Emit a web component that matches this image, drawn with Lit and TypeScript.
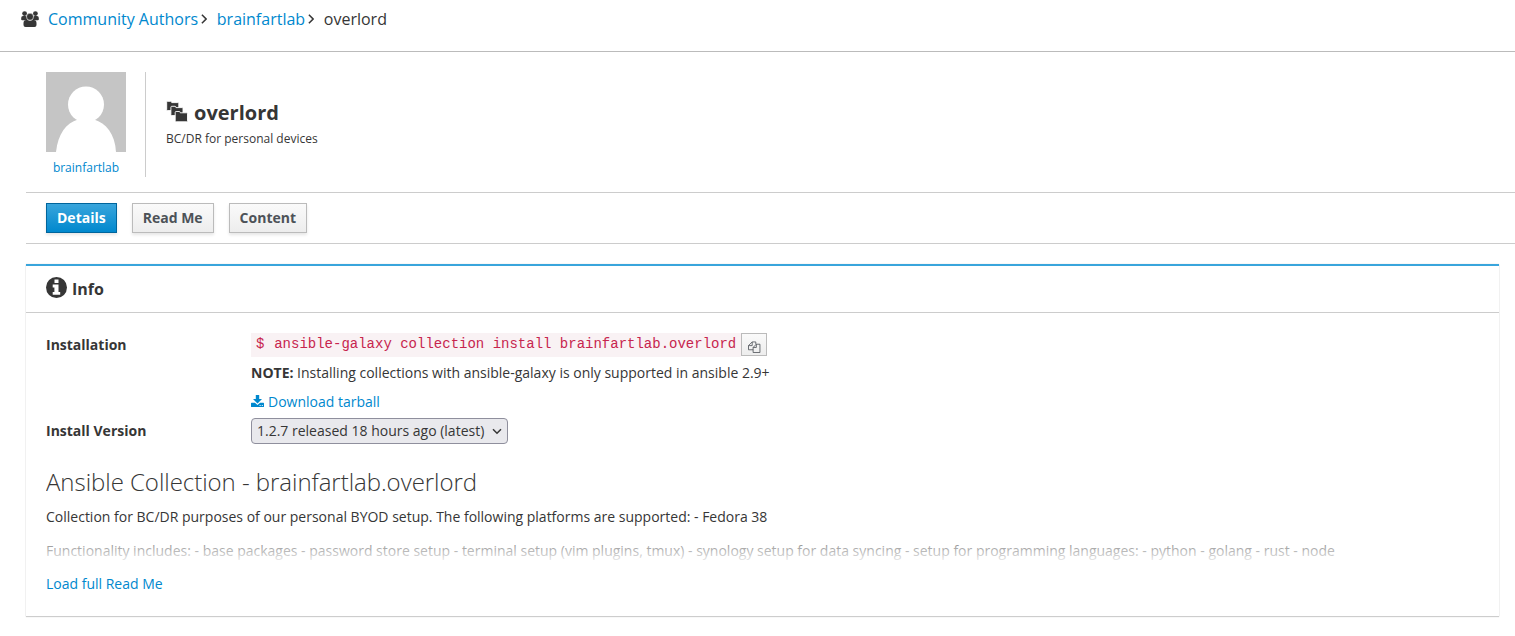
import { LitElement, html, css } from "lit";
import { customElement, state } from "lit/decorators.js";

const usersIcon = html`<svg class="users" viewBox="0 0 18 16">
  <g fill="#363636">
    <circle cx="3.6" cy="2.6" r="2.4" /><circle cx="14.4" cy="2.6" r="2.4" />
    <path d="M.2 8.600V6.900Q.2 5 2 5h2.300q.8 0 1.200.8Q5.300 8 7 9.300H1.200Q.2 9.300.2 8.600zM17.800 8.600V6.900Q17.800 5 16 5h-2.300q-.8 0-1.200.8.2 2.200-1.500 3.500h5.800q1 0 1-.7z" />
    <circle cx="9" cy="5.700" r="3.400" stroke="#fff" stroke-width=".4" />
    <path d="M2.500 14V12Q2.500 9.200 5.400 9h1Q9 10.600 11.600 9h1Q15.500 9.200 15.500 12v2q0 2-2 2H4.500q-2 0-2-2z" />
  </g>
</svg>`;

const chevronIcon = html`<svg class="chevron" viewBox="0 0 6 10">
  <path d="M.9.700l4.200 4.300-4.200 4.300" fill="none" stroke="#363636" stroke-width="1.500" />
</svg>`;

const foldersIcon = html`<svg class="folders" viewBox="0 0 22 22">
  <g fill="#363636" stroke="#fff" stroke-width=".9">
    <path d="M.700 1.200q0-.9.9-.9h3.200q.9 0 .9.900v.4h6.200q.9 0 .9.900v6.200q0 .9-.9.900H1.600q-.9 0-.9-.9z" />
    <path d="M4.900 6.200q0-.9.9-.9H9q.9 0 .9.900v.4h6.200q.9 0 .9.900v6.200q0 .9-.9.900H5.800q-.9 0-.9-.9z" />
    <path d="M9.200 11.400q0-.9.900-.9h3.200q.9 0 .9.900v.4h6.400q.9 0 .9.900v7.200q0 .9-.9.900H10.100q-.9 0-.9-.9z" />
  </g>
</svg>`;

const infoIcon = html`<svg class="info" viewBox="0 0 21 21">
  <circle cx="10.500" cy="10.500" r="10.500" fill="#363636" />
  <path fill="#fff" d="M8.500 2.500h4v3.400h-4zM6.700 7.600h5.800v7.300h1.700v2.800H6.700v-2.800h1.700v-4.500H6.700z" />
</svg>`;

const copyIcon = html`<svg class="copy" viewBox="0 0 14 13">
  <g fill="none" stroke="#4d5258" stroke-width=".9">
    <path d="M5.500 9.500h-5V5l4-4h3.900v2.500M4.500 1v4h-4" />
    <path d="M5.500 7l3.400-3.500h4v9H5.500zM9 3.500V7H5.500" />
  </g>
</svg>`;

const downloadIcon = html`<svg class="download" viewBox="0 0 13 12">
  <path fill="#0088ce" d="M4.800 0h3.400v4h2.800L6.500 8.400 2 4h2.800z" />
  <path fill="#0088ce" d="M.6 7.800h3.300l2.600 2.100 2.600-2.100h3.300q.6 0 .6.600v3q0 .6-.6.600H.6q-.6 0-.6-.6v-3q0-.6.600-.6z" />
  <path fill="#fff" d="M8.600 9.900h1v1h-1zM10.800 9.900h1v1h-1z" />
</svg>`;

@customElement("app-root")
export class AppRoot extends LitElement {
  static styles = css`
    :host {
      display: block;
      height: 636px;
      overflow: hidden;
      background: #fff;
      color: #363636;
      font: 14px/24px "Open Sans", sans-serif;
    }
    * { box-sizing: border-box; }
    svg { display: block; flex: none; }
    a { color: #0088ce; text-decoration: none; }
    .crumbs {
      display: flex;
      height: 52px;
      padding: 7px 0 0 21px;
      border-bottom: 1px solid #bbb;
      font-size: 16px;
    }
    .users { width: 18px; height: 16px; margin: 4px 9px 0 0; }
    .chevron { width: 6px; height: 10px; margin: 7px 9.700px 0 3px; }
    .page { padding-left: 26px; }
    .header {
      display: flex;
      height: 141px;
      padding: 20px 0 0 20px;
      border-bottom: 1px solid #ccc;
    }
    .author {
      width: 100px;
      height: 105px;
      border-right: 1px solid #ccc;
      font-size: 12px;
    }
    .author a { display: block; width: 80px; margin-top: 4px; text-align: center; }
    .avatar { width: 80px; height: 80px; }
    .summary { padding: 28px 0 0 20px; font-size: 12px; }
    .title { display: flex; gap: 6px; height: 27px; font-size: 20px; font-weight: 700; line-height: 26px; }
    .folders { width: 22px; height: 22px; margin-top: 1px; }
    .tabs {
      display: flex;
      gap: 15px;
      height: 51px;
      padding: 10px 20px;
      border-bottom: 1px solid #ccc;
    }
    .tab {
      height: 30px;
      padding: 0 10px;
      border: 1px solid #bbb;
      background: linear-gradient(#fafafa, #ededed);
      box-shadow: 0 2px 3px rgba(3, 3, 3, 0.1);
      color: #4d5258;
      font: 700 14px/28px "Open Sans", sans-serif;
    }
    .tab.active {
      border-color: #00659c;
      background: linear-gradient(#39a5dc, #0088ce);
      color: #fff;
    }
    .card {
      height: 352px;
      margin: 20px 16px 0 0;
      border-top: 2px solid #39a5dc;
      box-shadow: 0 1px 1px rgba(3, 3, 3, 0.175), 0 0 1px rgba(3, 3, 3, 0.175);
    }
    .card-title {
      display: flex;
      height: 47px;
      padding: 11px 20px 0;
      border-bottom: 1px solid #ccc;
      font-size: 16px;
      font-weight: 700;
    }
    .info { width: 21px; height: 21px; margin: 0 5px 0 0; }
    .card-body { padding: 20px; }
    .row { display: flex; }
    .label { width: 205px; font-weight: 700; }
    .version-label { padding-top: 1px; }
    .command { display: flex; height: 28px; }
    code {
      height: 24px;
      padding: 0 5px;
      background: #f9f2f4;
      color: #c7254e;
      font: 14px/23px "Liberation Mono", monospace;
      white-space: pre;
    }
    .prompt { margin-right: 1.400px; }
    .copy-button {
      display: flex;
      width: 26px;
      height: 23px;
      padding: 7px 0 0 6px;
      border: 1px solid #bbb;
      background: linear-gradient(#fafafa, #ededed);
    }
    .copy { width: 13px; height: 12px; }
    .note { height: 29px; }
    .tarball { display: flex; height: 28px; gap: 4px; }
    .download { width: 13px; height: 12px; margin-top: 5px; }
    .version {
      display: flex;
      justify-content: space-between;
      width: 257px;
      height: 26px;
      padding: 0 5px;
      border: 1px solid #8f8f9d;
      border-radius: 4px;
      background: #e9e9ed;
    }
    .arrow { width: 10px; height: 7px; margin-top: 9px; }
    .readme { height: 121px; overflow: hidden; position: relative; }
    h1 { margin: 21px 0 0; font-size: 24px; font-weight: 300; line-height: 34px; letter-spacing: -0.040px; }
    p { margin: 6px 0 10px; }
    p + p { margin-top: 0; }
    .fade {
      position: absolute;
      inset: auto 0 0;
      height: 40px;
      background: linear-gradient(rgba(255, 255, 255, 0), #fff);
    }
    .more { display: block; margin-top: 7px; }
  `;

  @state() private tab = "Details";

  render() {
    return html`
      <nav class="crumbs">
        ${usersIcon}<a>Community Authors</a>${chevronIcon}<a>brainfartlab</a>${chevronIcon}<span>overlord</span>
      </nav>
      <main class="page">
        <header class="header">
          <div class="author">
            <svg class="avatar" viewBox="0 0 80 80">
              <path fill="#c5c5c5" d="M0 0h80v80H0z" />
              <circle cx="40" cy="32.500" r="18" fill="#fff" />
              <path fill="#fff" d="M10 80C12 62 20 51 32 47.500H48C60 51 69 62 70 80z" />
            </svg>
            <a>brainfartlab</a>
          </div>
          <div class="summary">
            <div class="title">${foldersIcon}<span>overlord</span></div>
            <div>BC/DR for personal devices</div>
          </div>
        </header>
        <div class="tabs">
          ${["Details", "Read Me", "Content"].map(
            (name) => html`<button class="tab ${this.tab === name ? "active" : ""}" @click=${() => (this.tab = name)}>${name}</button>`
          )}
        </div>
        <section class="card">
          <div class="card-title">${infoIcon}<span>Info</span></div>
          <div class="card-body">
            <div class="row">
              <div class="label">Installation</div>
              <div>
                <div class="command">
                  <code><span class="prompt">$</span> ansible-galaxy collection install brainfartlab.overlord</code>
                  <button class="copy-button" aria-label="Copy">${copyIcon}</button>
                </div>
                <div class="note"><b>NOTE:</b> Installing collections with ansible-galaxy is only supported in ansible 2.9+</div>
                <a class="tarball">${downloadIcon}<span>Download tarball</span></a>
              </div>
            </div>
            <div class="row">
              <div class="label version-label">Install Version</div>
              <div class="version">
                <span>1.2.7 released 18 hours ago (latest)</span>
                <svg class="arrow" viewBox="0 0 10 7"><path d="M1 1.200l4 4 4-4" fill="none" stroke="#363636" stroke-width="1.500" /></svg>
              </div>
            </div>
            <div class="readme">
              <h1>Ansible Collection - brainfartlab.overlord</h1>
              <p>Collection for BC/DR purposes of our personal BYOD setup. The following platforms are supported: - Fedora 38</p>
              <p>Functionality includes: - base packages - password store setup - terminal setup (vim plugins, tmux) - synology setup for data syncing - setup for programming languages: - python - golang - rust - node</p>
              <div class="fade"></div>
            </div>
            <a class="more">Load full Read Me</a>
          </div>
        </section>
      </main>
    `;
  }
}
